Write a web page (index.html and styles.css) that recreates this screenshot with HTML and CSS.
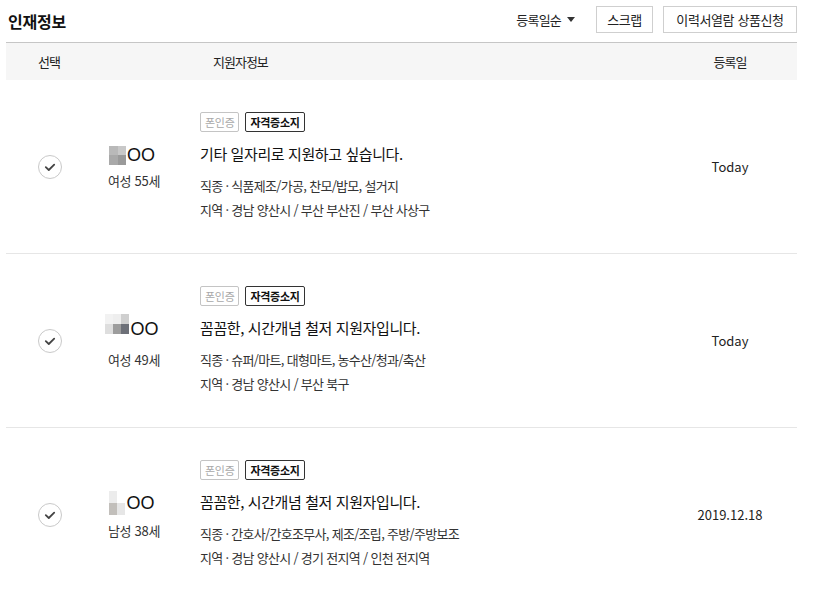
FILE: index.html
```html
<!DOCTYPE html>
<html lang="ko">
<head>
<meta charset="utf-8">
<title>인재정보</title>
<link rel="stylesheet" href="styles.css">
</head>
<body>
<div class="page">
  <div class="topbar">
    <h1 class="title">인재정보</h1>
    <div class="actions">
      <div class="sort">등록일순 <span class="caret"></span></div>
      <button class="btn">스크랩</button>
      <button class="btn">이력서열람 상품신청</button>
    </div>
  </div>
  <div class="thead">
    <div class="th th-sel">선택</div>
    <div class="th"></div>
    <div class="th th-info">지원자정보</div>
    <div class="th th-date">등록일</div>
  </div>

  <div class="row">
    <div class="cell-sel">
      <svg class="check" width="26" height="26" viewBox="0 0 26 26"><circle cx="13" cy="13" r="11.5" fill="#fff" stroke="#c9c9c9" stroke-width="1"/><path d="M8.8 13.2 L11.8 16 L17.2 10.6" fill="none" stroke="#444" stroke-width="1.8" stroke-linecap="round" stroke-linejoin="round"/></svg>
    </div>
    <div class="cell-name">
      <div class="name"><span class="mosaic m1"><i class="c1"></i><i class="c2"></i><i class="c3"></i><i class="c4"></i></span>OO</div>
      <div class="age">여성 55세</div>
    </div>
    <div class="cell-info">
      <div class="badges"><span class="badge off">폰인증</span><span class="badge on">자격증소지</span></div>
      <div class="headline">기타 일자리로 지원하고 싶습니다.</div>
      <div class="meta">직종 · 식품제조/가공, 찬모/밥모, 설거지</div>
      <div class="meta">지역 · 경남 양산시 / 부산 부산진 / 부산 사상구</div>
    </div>
    <div class="cell-date">Today</div>
  </div>

  <div class="row">
    <div class="cell-sel">
      <svg class="check" width="26" height="26" viewBox="0 0 26 26"><circle cx="13" cy="13" r="11.5" fill="#fff" stroke="#c9c9c9" stroke-width="1"/><path d="M8.8 13.2 L11.8 16 L17.2 10.6" fill="none" stroke="#444" stroke-width="1.8" stroke-linecap="round" stroke-linejoin="round"/></svg>
    </div>
    <div class="cell-name">
      <div class="name"><span class="mosaic m2"><i class="c1"></i><i class="c2"></i><i class="c3"></i><i class="c4"></i><i class="c5"></i><i class="c6"></i></span>OO</div>
      <div class="age">여성 49세</div>
    </div>
    <div class="cell-info">
      <div class="badges"><span class="badge off">폰인증</span><span class="badge on">자격증소지</span></div>
      <div class="headline">꼼꼼한, 시간개념 철저 지원자입니다.</div>
      <div class="meta">직종 · 슈퍼/마트, 대형마트, 농수산/청과/축산</div>
      <div class="meta">지역 · 경남 양산시 / 부산 북구</div>
    </div>
    <div class="cell-date">Today</div>
  </div>

  <div class="row">
    <div class="cell-sel">
      <svg class="check" width="26" height="26" viewBox="0 0 26 26"><circle cx="13" cy="13" r="11.5" fill="#fff" stroke="#c9c9c9" stroke-width="1"/><path d="M8.8 13.2 L11.8 16 L17.2 10.6" fill="none" stroke="#444" stroke-width="1.8" stroke-linecap="round" stroke-linejoin="round"/></svg>
    </div>
    <div class="cell-name">
      <div class="name"><span class="mosaic m3"><i class="c1"></i><i class="c2"></i><i class="c3"></i><i class="c4"></i></span>OO</div>
      <div class="age">남성 38세</div>
    </div>
    <div class="cell-info">
      <div class="badges"><span class="badge off">폰인증</span><span class="badge on">자격증소지</span></div>
      <div class="headline">꼼꼼한, 시간개념 철저 지원자입니다.</div>
      <div class="meta">직종 · 간호사/간호조무사, 제조/조립, 주방/주방보조</div>
      <div class="meta">지역 · 경남 양산시 / 경기 전지역 / 인천 전지역</div>
    </div>
    <div class="cell-date">2019.12.18</div>
  </div>
</div>
</body>
</html>
```

FILE: styles.css
```css
* { box-sizing: border-box; }
html, body { margin: 0; padding: 0; background: #fff; }
body {
  font-family: "Noto Sans CJK KR", "Noto Sans", sans-serif;
  color: #222;
  font-size: 13px;
}
.page { padding: 0 16px 0 6px; }

.topbar {
  height: 43px;
  display: flex;
  justify-content: space-between;
  align-items: flex-start;
  border-bottom: 1px solid #c6c6c6;
}
.title {
  margin: 10px 0 0 2px;
  font-size: 16px;
  line-height: 22px;
  font-weight: 700;
  letter-spacing: -0.2px;
  color: #111;
}
.actions { display: flex; align-items: center; margin-top: 6px; }
.sort {
  display: flex; align-items: center; gap: 6px;
  font-size: 13px; letter-spacing: -0.8px; color: #222;
  margin-right: 21px;
}
.caret {
  width: 0; height: 0;
  border-left: 4px solid transparent;
  border-right: 4px solid transparent;
  border-top: 5px solid #333;
}
.btn {
  height: 27px;
  padding: 0 6px;
  margin-left: 10px;
  border: 1px solid #cfcfcf;
  background: #fff;
  font-family: inherit;
  font-size: 13px;
  letter-spacing: -0.4px;
  color: #222;
}
.btn:first-of-type { width: 57px; margin-left: 0; }
.btn + .btn { width: 134px; }

.thead {
  display: grid;
  grid-template-columns: 86px 84px 1fr 134px;
  height: 37px;
  align-items: center;
  background: #f6f6f6;
  font-size: 13px;
  letter-spacing: -1px;
  color: #222;
}
.th-sel { text-align: center; }
.th-info { padding-left: 37px; }
.th-date { text-align: center; }

.row {
  display: grid;
  grid-template-columns: 86px 84px 1fr 134px;
  height: 174px;
  align-items: center;
  border-bottom: 1px solid #e6e6e6;
}
.cell-sel { display: flex; justify-content: center; padding-left: 1px; }
.check { display: block; }

.cell-name { text-align: center; padding-top: 2px; }
.name {
  display: flex; align-items: center; justify-content: center;
  font-family: "Liberation Sans", sans-serif;
  font-size: 18px; line-height: 20px; color: #111;
  padding-right: 4px;
}
.mosaic { display: grid; margin-right: 1px; }
.mosaic i { display: block; }
.m1 { grid-template-columns: 9px 8px; grid-template-rows: 9px 10px; }
.m1 .c1 { background: #b9b9b9; } .m1 .c2 { background: #c8c8c8; }
.m1 .c3 { background: #a9a9a9; } .m1 .c4 { background: #9a9a9a; }
.m2 { grid-template-columns: 8px 8px 8px; grid-template-rows: 10px 10px 10px; margin-top: 0; }
.m2 .c1 { background: #f2f2f2; } .m2 .c2 { background: #eeeeee; } .m2 .c3 { background: #cfcfcf; }
.m2 .c4 { background: #dedede; } .m2 .c5 { background: #9d9d9d; } .m2 .c6 { background: #6d7078; }
.m3 { grid-template-columns: 8px 8px; grid-template-rows: 12px 12px; }
.m3 .c1 { background: #ececec; } .m3 .c2 { background: #ffffff; }
.m3 .c3 { background: #c2bfbb; } .m3 .c4 { background: #e6e6e6; }
.age {
  margin-top: 7px;
  font-size: 13px; line-height: 18px; letter-spacing: -0.3px; color: #333;
}

.cell-info { padding-left: 24px; }
.badges { display: flex; gap: 6px; }
.badge {
  height: 20px;
  padding: 0 4px;
  border: 1px solid #bdbdbd;
  border-radius: 2px;
  font-size: 11px; line-height: 18px; letter-spacing: -0.3px;
}
.badge.off { color: #a8a8a8; border-color: #c4c4c4; }
.badge.on { color: #111; border-color: #333; font-weight: 700; }
.headline {
  margin-top: 11px;
  font-size: 15px; line-height: 22px; letter-spacing: -0.4px; color: #111;
}
.meta {
  font-size: 13px; line-height: 24px; letter-spacing: -0.7px; color: #333;
}
.headline + .meta { margin-top: 9px; }

.cell-date {
  text-align: center;
  font-size: 13px; color: #222;
}
```
